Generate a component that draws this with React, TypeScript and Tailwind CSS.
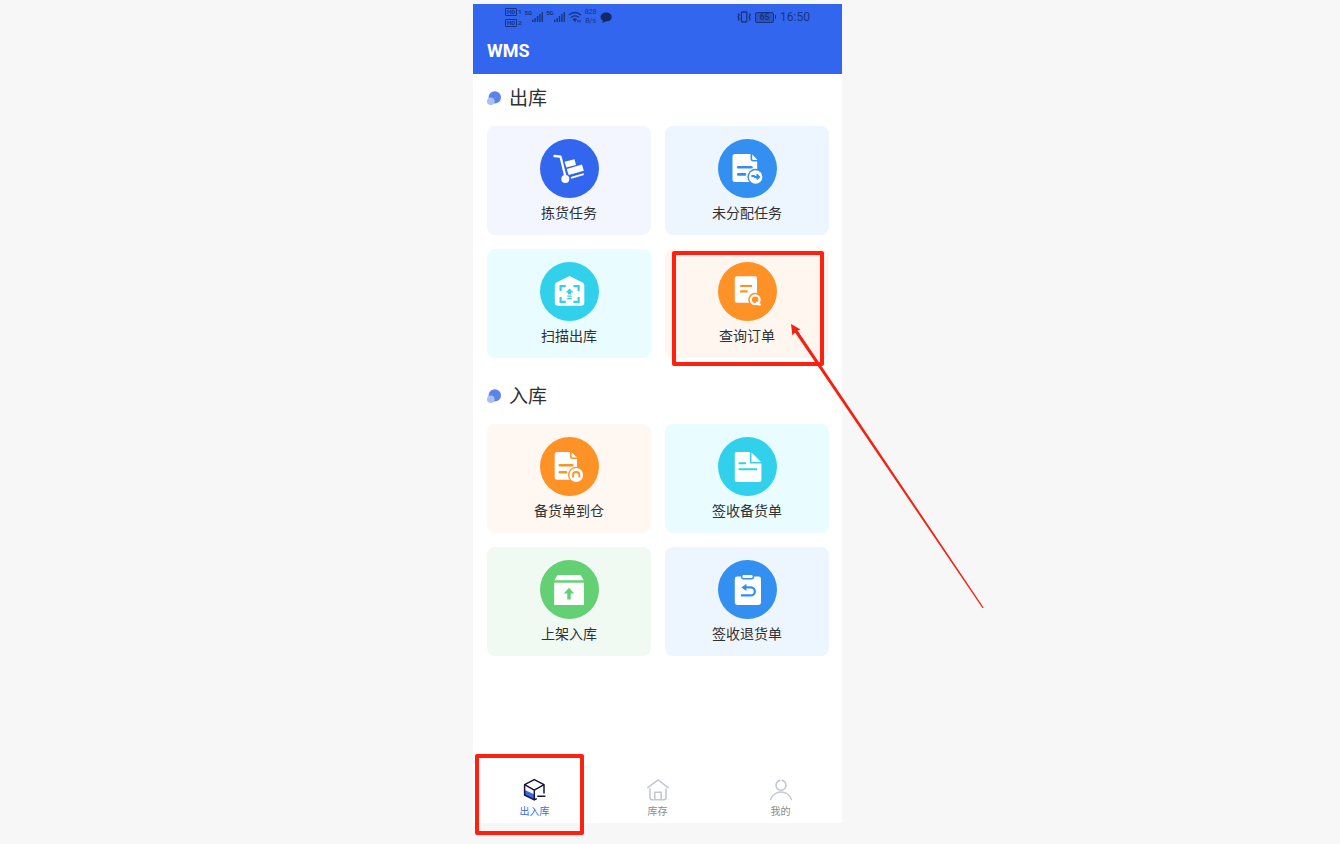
import type { ReactNode } from "react";
import clsx from "clsx";

type Task = {
  label: string;
  card: string;
  circle: string;
  icon: ReactNode;
  marked?: boolean;
};

const CartIcon = () => (
  <>
    <path
      d="M14.5 17L20.5 17.6L25 36"
      fill="none"
      stroke="#fff"
      strokeWidth="2.3"
      strokeLinecap="round"
      strokeLinejoin="round"
    />
    <circle cx="25.3" cy="40" r="4" fill="#fff" />
    <path d="M24.6 22.8L34.5 20.2L36 26L26.4 28.4Z" fill="#fff" />
    <path d="M26.8 30L42 25.5L43.8 31.8L28.6 36Z" fill="#fff" />
    <path d="M31 38.9L43.8 35.2" stroke="#fff" strokeWidth="1.8" />
  </>
);

const AssignIcon = () => (
  <>
    <path
      d="M17 15H32.5V19.5Q32.5 22.5 35.5 22.5H39.2V43H17Q14.5 43 14.5 40.5V17.5Q14.5 15 17 15Z"
      fill="#fff"
    />
    <path d="M34.2 15.2L39.4 21H35.4Q34.2 21 34.2 19.8Z" fill="#fff" />
    <path
      d="M20.2 28.3H33.5M20.2 35.4H27"
      stroke="#338ff0"
      strokeWidth="2.6"
      strokeLinecap="round"
    />
    <circle cx="37.6" cy="38" r="8.2" fill="#338ff0" />
    <circle cx="37.6" cy="38" r="6.8" fill="#fff" />
    <path
      d="M33.4 37H36L37 38H41M38.6 35.4L41.2 38L38.6 40.2"
      fill="none"
      stroke="#338ff0"
      strokeWidth="1.9"
    />
  </>
);

const ScanIcon = () => (
  <>
    <path
      d="M29.5 14L42.6 20.6Q44.3 21.5 44.3 23.4V40.5Q44.3 43.8 41 43.8H18Q14.8 43.8 14.8 40.5V23.4Q14.8 21.5 16.4 20.6Z"
      fill="#fff"
    />
    <path
      d="M20.6 29V24.2H25.8M33.4 24.2H38.6V29M38.6 35V39.9H33.4M25.8 39.9H20.6V35"
      fill="none"
      stroke="#32d1eb"
      strokeWidth="2.2"
    />
    <path d="M29.5 26.4L33.4 30.4H31V32.6H28V30.4H25.6Z" fill="#32d1eb" />
    <path d="M27.2 34.2H31.8M27.2 36.6H31.8" stroke="#32d1eb" strokeWidth="1.2" />
  </>
);

const SearchOrderIcon = () => (
  <>
    <rect x="16.8" y="14.3" width="22.2" height="26.4" rx="1.8" fill="#fff" />
    <path d="M22.2 24H34M22.2 29.4H29.6" stroke="#ff9226" strokeWidth="2.2" />
    <circle cx="37.2" cy="37.8" r="7" fill="#ff9226" />
    <circle
      cx="37.2"
      cy="37.8"
      r="4.4"
      fill="#ff9226"
      stroke="#fff"
      strokeWidth="2.3"
    />
    <path d="M38.3 39.8L40.6 42.6H42.8" fill="none" stroke="#fff" strokeWidth="2" />
  </>
);

const StockArriveIcon = () => (
  <>
    <path
      d="M17 15H30V19.5Q30 22 32.5 22H37V42.7H17Q14.7 42.7 14.7 40.4V17.3Q14.7 15 17 15Z"
      fill="#fff"
    />
    <path d="M31.6 15.2L37 20.6H32.8Q31.6 20.6 31.6 19.4Z" fill="#fff" />
    <path
      d="M19.8 28.2H32.3M19.8 35.2H26"
      stroke="#ff9226"
      strokeWidth="2.6"
      strokeLinecap="round"
    />
    <circle cx="36.2" cy="38" r="8.2" fill="#ff9226" />
    <circle cx="36.2" cy="38" r="6.9" fill="#fff" />
    <path
      d="M33 40.6V38.2A3.2 3.2 0 0 1 39.4 38.2V40.6"
      fill="none"
      stroke="#ff9226"
      strokeWidth="1.8"
    />
  </>
);

const SignStockIcon = () => (
  <>
    <path
      d="M18.6 15H31.8V26.4H43.4V43.2Q43.4 45 41.6 45H18.6Q16.8 45 16.8 43.2V16.8Q16.8 15 18.6 15Z"
      fill="#fff"
    />
    <path d="M33.5 15.4L43 25H33.5Z" fill="#fff" />
    <path d="M20.6 26.2H28M20.6 32.3H39" stroke="#32d1eb" strokeWidth="2.1" />
  </>
);

const ShelveIcon = () => (
  <>
    <path d="M17.5 15H40.5L43.8 20.3H14.4Z" fill="#fff" />
    <rect x="14.2" y="22.7" width="29.8" height="22.3" fill="#fff" />
    <path d="M29 27.8L34.2 33.6H30.7V39.4H27.3V33.6H23.8Z" fill="#62d073" />
  </>
);

const SignReturnIcon = () => (
  <>
    <rect x="16.8" y="16.6" width="26.2" height="28.4" rx="2.4" fill="#fff" />
    <rect
      x="23.8"
      y="14.4"
      width="11.6"
      height="4.4"
      rx="1.8"
      fill="#fff"
      stroke="#338ff0"
      strokeWidth="1.4"
    />
    <path
      d="M26 27.4H32.8A4 4 0 0 1 32.8 35.4H23"
      fill="none"
      stroke="#338ff0"
      strokeWidth="2.3"
    />
    <path d="M23.4 27.4L28.4 23.8V31Z" fill="#338ff0" />
  </>
);

const OUTBOUND: Task[] = [
  { label: "拣货任务", card: "bg-[#f3f6ff]", circle: "bg-[#3366ee]", icon: <CartIcon /> },
  { label: "未分配任务", card: "bg-[#edf6ff]", circle: "bg-[#338ff0]", icon: <AssignIcon /> },
  { label: "扫描出库", card: "bg-[#e9fcff]", circle: "bg-[#32d1eb]", icon: <ScanIcon /> },
  {
    label: "查询订单",
    card: "bg-[#fff6f0]",
    circle: "bg-[#ff9226]",
    icon: <SearchOrderIcon />,
    marked: true,
  },
];

const INBOUND: Task[] = [
  { label: "备货单到仓", card: "bg-[#fff7f1]", circle: "bg-[#ff9226]", icon: <StockArriveIcon /> },
  { label: "签收备货单", card: "bg-[#e9fcff]", circle: "bg-[#32d1eb]", icon: <SignStockIcon /> },
  { label: "上架入库", card: "bg-[#f1f9f3]", circle: "bg-[#62d073]", icon: <ShelveIcon /> },
  { label: "签收退货单", card: "bg-[#edf6ff]", circle: "bg-[#338ff0]", icon: <SignReturnIcon /> },
];

const BoxIcon = () => (
  <svg viewBox="0 0 24 24" className="h-6 w-6" fill="none">
    <path d="M2 12L11.5 16.5V21.5L2 17Z" fill="#3b6be8" />
    <path
      d="M11.3 21.9L1.6 17V6.7L11.3 1.6L21 6.7V15.5M1.6 6.7L11.3 12.2L21 6.7M11.3 12.2V21.9L13.8 20.6M14.2 18.3H22.4"
      stroke="#15153f"
      strokeWidth="1.5"
      strokeLinejoin="round"
    />
  </svg>
);

const HomeIcon = () => (
  <svg viewBox="0 0 24 24" className="h-6 w-6" fill="none">
    <path
      d="M1.8 9.6L12 1.8L22.2 9.6M4 11V19.6Q4 21.8 6 21.8H18Q20 21.8 20 19.6V11M8.8 21V14.2H15.2V21"
      stroke="#c6c8d2"
      strokeWidth="1.6"
      strokeLinecap="round"
      strokeLinejoin="round"
    />
  </svg>
);

const UserIcon = () => (
  <svg viewBox="0 0 24 24" className="h-6 w-6" fill="none">
    <path
      d="M10.8 2.4A5 5 0 1 0 13.2 2.4M1.6 21.4A11 11 0 0 1 22.4 21.4"
      stroke="#c6c8d2"
      strokeWidth="1.6"
      strokeLinecap="round"
    />
  </svg>
);

const TABS = [
  { label: "出入库", icon: <BoxIcon />, active: true },
  { label: "库存", icon: <HomeIcon />, active: false },
  { label: "我的", icon: <UserIcon />, active: false },
];

function Signal() {
  return (
    <span className="flex items-center">
      <span className="-mt-2 text-[6px] leading-none font-bold">5G</span>
      <svg viewBox="0 0 11 10" className="h-[10px] w-[11px]" fill="currentColor">
        <path d="M0 7.5h1.4V10H0zM2.4 6h1.4v4H2.4zM4.8 4h1.4v6H4.8zM7.2 2h1.4v8H7.2zM9.6 0H11v10H9.6z" />
      </svg>
    </span>
  );
}

function StatusBar() {
  return (
    <div className="flex h-[26px] items-center justify-between px-8 text-[#18347f]">
      <div className="flex items-center gap-[3px]">
        <div className="flex flex-col gap-[3px] text-[6px] leading-[6px] font-bold">
          {["1", "2"].map((sim) => (
            <span key={sim} className="flex items-center gap-px">
              <span className="rounded-[1px] border border-current px-px">HD</span>
              {sim}
            </span>
          ))}
        </div>
        <Signal />
        <Signal />
        <svg viewBox="0 0 14 12" className="h-3 w-[14px]" fill="none">
          <path
            d="M1 4Q7-1 13 4M3 6.5Q7 3.2 11 6.5M5 8.8Q7 7.2 8.6 8.6"
            stroke="currentColor"
            strokeWidth="1.4"
          />
          <path d="M5.7 9L7 11.3L8.3 9Z" fill="currentColor" />
          <path d="M10 9v2.5M12 9v2.5" stroke="currentColor" />
        </svg>
        <span className="flex flex-col text-center text-[7px] leading-[9px]">
          <span>828</span>
          <span>B/s</span>
        </span>
        <svg viewBox="0 0 12 11" className="h-[11px] w-3" fill="#132868">
          <path d="M6.3 0.4C9.5 0.4 11.7 2.3 11.7 4.9S9.5 9.3 6.3 9.3C5.5 9.3 4 10.8 2.3 10.8L3 8.6C1.2 7.9 0.6 6.5 0.6 4.9C0.6 2.3 3 0.4 6.3 0.4Z" />
        </svg>
      </div>
      <div className="flex items-center gap-1">
        <svg viewBox="0 0 14 12" className="h-3 w-[14px]" fill="none" stroke="currentColor">
          <rect x="4.4" y="1" width="5.4" height="10" rx="1" strokeWidth="1.3" />
          <path
            d="M1 2.5L2.2 4L1 6L2.2 8L1 9.5M12.2 2.5L13.2 4L12.2 6L13.2 8L12.2 9.5"
            strokeWidth="1.3"
          />
        </svg>
        <span className="flex items-center gap-px">
          <span className="flex h-[11px] w-[19px] items-center justify-center rounded-xs border border-current bg-[#2c54c4] text-[9px] leading-none font-bold">
            65
          </span>
          <span className="h-1 w-px bg-current" />
        </span>
        <span className="text-[12px] leading-none">16:50</span>
      </div>
    </div>
  );
}

// Red frame round the order lookup card with the arrow that points at it
function CardMark() {
  return (
    <>
      <div className="pointer-events-none absolute top-[2px] left-[7px] h-[115px] w-[152px] rounded-xs border-4 border-[#ff2010]" />
      <svg
        viewBox="0 0 194 286"
        className="pointer-events-none absolute top-[74px] left-[125px] z-10 h-[286px] w-[194px]"
        fill="#f5200f"
      >
        <path d="M1 1L10.5 6.5L7.6 7.6L193.6 284.4L192.6 285.2L5 9.6L2.4 12.4Z" />
      </svg>
    </>
  );
}

function Section({ title, tasks }: { title: string; tasks: Task[] }) {
  return (
    <section>
      <h2 className="flex h-[52px] items-center gap-2 pb-[2px] text-[19px] leading-6 text-[#303133]">
        <svg viewBox="0 0 14 16" className="h-4 w-[14px]">
          <circle cx="7.8" cy="6.4" r="6.2" fill="#5b83ee" />
          <circle cx="3.8" cy="10.2" r="3.8" fill="#a9bff7" />
        </svg>
        {title}
      </h2>
      <div className="grid grid-cols-2 gap-[14px]">
        {tasks.map((task) => (
          <div key={task.label} className="relative">
            <button
              type="button"
              className={clsx(
                "flex w-full flex-col items-center rounded-lg pt-[13px] pb-3 text-[14px] leading-5 text-[#303133]",
                task.card,
              )}
            >
              <span className={clsx("mb-[5px] rounded-full", task.circle)}>
                <svg viewBox="0 0 59 59" className="h-[59px] w-[59px]">
                  {task.icon}
                </svg>
              </span>
              {task.label}
            </button>
            {task.marked && <CardMark />}
          </div>
        ))}
      </div>
    </section>
  );
}

export default function App() {
  return (
    <div className="flex min-h-screen justify-center bg-[#f7f7f7] pt-1 pr-[25px] pb-[21px] font-[Roboto,'Noto_Sans_CJK_SC',sans-serif]">
      <div className="flex w-full max-w-[369px] flex-col bg-white">
        <header className="bg-[#3366ee]">
          <StatusBar />
          <h1 className="px-[14px] pt-[9px] pb-[11px] text-[18px] leading-6 font-bold text-white">
            WMS
          </h1>
        </header>

        <main className="flex flex-1 flex-col gap-[14px] pr-[13px] pl-[14px]">
          <Section title="出库" tasks={OUTBOUND} />
          <Section title="入库" tasks={INBOUND} />
        </main>

        <nav className="relative grid grid-cols-3 pb-[3px]">
          {TABS.map((tab) => (
            <button
              key={tab.label}
              type="button"
              className={clsx(
                "flex flex-col items-center gap-[2px] text-[10px] leading-4",
                tab.active ? "text-[#3b6be8]" : "text-[#8c8c8c]",
              )}
            >
              {tab.icon}
              {tab.label}
            </button>
          ))}
          <div className="pointer-events-none absolute -bottom-3 left-[2px] h-[81px] w-[109px] rounded-xs border-4 border-[#ff2010]" />
        </nav>
      </div>
    </div>
  );
}
